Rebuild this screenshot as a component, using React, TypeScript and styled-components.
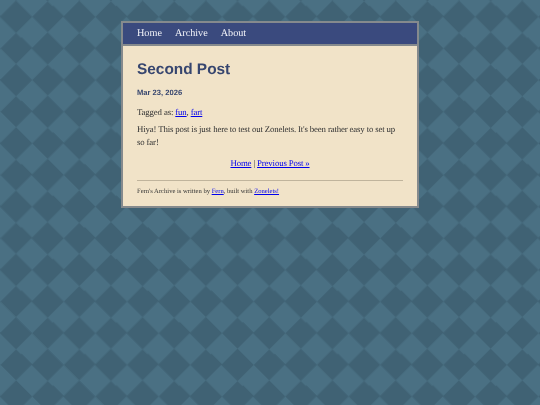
import React from 'react';
import styled, { createGlobalStyle } from 'styled-components';

const lightTeal = '#4a7083';
const darkTeal = '#406274';
const squareSide = 22.38;

const GlobalStyle = createGlobalStyle`
  html, body {
    margin: 0;
    padding: 0;
  }
  body {
    min-height: 405px;
    background: ${darkTeal};
    text-rendering: geometricPrecision;
    overflow: hidden;
  }
  /* the diamonds: a checkerboard turned by 45deg, behind everything */
  body::before {
    content: '';
    position: fixed;
    left: -230px;
    top: -297.5px;
    width: 1000px;
    height: 1000px;
    z-index: -1;
    transform: rotate(45deg);
    filter: blur(0.4px);
    background-image: conic-gradient(${lightTeal} 25%, ${darkTeal} 0 50%, ${lightTeal} 0 75%, ${darkTeal} 0);
    background-size: ${squareSide * 2}px ${squareSide * 2}px;
    background-position: 177.31px 536.5px;
  }
`;

const Page = styled.div`
  display: flex;
  justify-content: center;
  padding-top: 21px;
`;

const Panel = styled.div`
  width: 294px;
  border: 2px solid #858a8d;
  background: #f1e3c8;
  color: #333333;
  font-family: 'Liberation Serif', Georgia, serif;
  filter: blur(0.3px);
`;

const Nav = styled.nav`
  display: flex;
  gap: 13px;
  height: 21px;
  align-items: center;
  padding-left: 14px;
  background: #3a4a7e;
  border-bottom: 2px solid #858a8d;
`;

const NavLink = styled.a`
  color: #f4f5fa;
  font-size: 10.2px;
  text-decoration: none;
`;

const Main = styled.main`
  padding: 14px 14px 0;
`;

const Title = styled.h1`
  margin: 0;
  color: #37466f;
  font-family: 'Liberation Sans', Arial, sans-serif;
  font-size: 15.4px;
  line-height: 19px;
  font-weight: 700;
`;

const PostDate = styled.h4`
  margin: 9px 0 0;
  color: #37466f;
  font-family: 'Liberation Sans', Arial, sans-serif;
  font-size: 7.6px;
  line-height: 10px;
  font-weight: 700;
`;

const Tags = styled.p`
  margin: 8px 0 0;
  font-size: 8.8px;
  letter-spacing: -0.15px;
  line-height: 13px;
`;

const Paragraph = styled.p`
  margin: 4px 0 0;
  font-size: 8.8px;
  letter-spacing: -0.15px;
  line-height: 13px;
`;

const PostNav = styled.p`
  margin: 8px 0 0;
  font-size: 8.8px;
  letter-spacing: -0.15px;
  line-height: 13px;
  text-align: center;
`;

const Link = styled.a`
  color: #0000ee;
  text-decoration: underline;
`;

const Footer = styled.footer`
  margin-top: 10px;
  border-top: 1px solid #c0b49c;
  padding: 6px 0 10px;
  font-size: 6.6px;
  line-height: 9px;
`;

export default function App() {
  return (
    <>
      <GlobalStyle />
      <Page>
        <Panel>
          <Nav>
            <NavLink href="#">Home</NavLink>
            <NavLink href="#">Archive</NavLink>
            <NavLink href="#">About</NavLink>
          </Nav>
          <Main>
            <Title>Second Post</Title>
            <PostDate>Mar 23, 2026</PostDate>
            <Tags>
              Tagged as: <Link href="#">fun</Link>, <Link href="#">fart</Link>
            </Tags>
            <Paragraph>
              Hiya! This post is just here to test out Zonelets. It's been rather easy to set up so far!
            </Paragraph>
            <PostNav>
              <Link href="#">Home</Link> | <Link href="#">Previous Post »</Link>
            </PostNav>
            <Footer>
              Fern's Archive is written by <Link href="#">Fern</Link>, built with <Link href="#">Zonelets!</Link>
            </Footer>
          </Main>
        </Panel>
      </Page>
    </>
  );
}
